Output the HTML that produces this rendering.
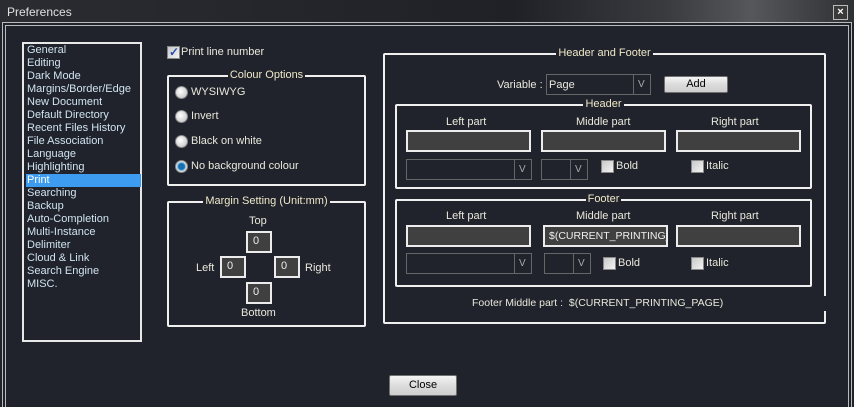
<!DOCTYPE html>
<html><head><style>
*{margin:0;padding:0;box-sizing:border-box}
html,body{width:854px;height:407px;overflow:hidden}
body{background:#20232b;font-family:"Liberation Sans",sans-serif;font-size:11px;color:#e8e8dc;position:relative}
.a{position:absolute;white-space:nowrap}
.tb{position:absolute;left:0;top:0;width:854px;height:23px;background:linear-gradient(90deg,#2a2c31 0%,#1f2126 60%,#3a3b3f 78%,#55575a 88%,#2f3034 100%)}
.g{position:absolute;border:2px solid #f0f0f0;border-radius:2px}
.gt{position:absolute;top:-8px;left:0;right:0;text-align:center;line-height:13px}
.gt span{background:#20232b;padding:0 2px;color:#efe8c8}
.ed{position:absolute;background:#404040;border:2px solid #ececec}
.cb{position:absolute;border:1px solid #666;background:#20232b}
.cb i{position:absolute;top:0;bottom:0;width:1px;background:#666}
.cb b{position:absolute;font-weight:normal;color:#aaa;font-size:10px;top:4px}
.chk{position:absolute;width:13px;height:13px;border:1px solid #888;background:linear-gradient(135deg,#c8c8c8,#f4f4f4)}
.rd{position:absolute;width:13px;height:13px;border-radius:50%;border:1px solid #888;background:radial-gradient(circle at 40% 40%,#fff,#bbb)}
.btn{position:absolute;border:1px solid #707070;border-radius:2px;background:linear-gradient(#f4f4f4,#dcdcdc 50%,#cfcfcf);color:#000;text-align:center}
.li{position:absolute;left:2px;width:115px;height:13px;line-height:13px;color:#cfe3f0;padding-left:1px}
.sm{position:absolute;width:26px;height:22px;background:#404040;border:2px solid #ececec;padding:2px 0 0 5px;color:#eee}
</style></head><body>
<div class="tb"></div>
<div class="a" style="left:7px;top:5px;font-size:12px;color:#e0e0e0">Preferences</div>
<div class="a" style="left:833px;top:5px;width:15px;height:15px;border:1px solid #bbb;background:#3a3a3a;color:#fff;font-size:11px;line-height:12px;text-align:center;font-weight:bold">×</div>
<div class="a" style="left:2px;top:22px;width:850px;height:385px;border:1px solid #bbb;border-bottom:none"></div>
<div class="a" style="left:5px;top:25px;width:844px;height:382px;border:1px solid #bbb;border-bottom:none"></div>

<div class="a" style="left:22px;top:42px;width:120px;height:300px;border:2px solid #e8e8e8">
<div class="li" style="top:0">General</div><div class="li" style="top:13px">Editing</div><div class="li" style="top:26px">Dark Mode</div><div class="li" style="top:39px">Margins/Border/Edge</div><div class="li" style="top:52px">New Document</div><div class="li" style="top:65px">Default Directory</div><div class="li" style="top:78px">Recent Files History</div><div class="li" style="top:91px">File Association</div><div class="li" style="top:104px">Language</div><div class="li" style="top:117px">Highlighting</div><div class="li" style="top:130px;background:#3d9bf0;color:#fff">Print</div><div class="li" style="top:143px">Searching</div><div class="li" style="top:156px">Backup</div><div class="li" style="top:169px">Auto-Completion</div><div class="li" style="top:182px">Multi-Instance</div><div class="li" style="top:195px">Delimiter</div><div class="li" style="top:208px">Cloud &amp; Link</div><div class="li" style="top:221px">Search Engine</div><div class="li" style="top:234px">MISC.</div>
</div>

<div class="chk" style="left:167px;top:46px"><span style="position:absolute;left:1px;top:-2px;color:#2a4fb0;font-size:12px;font-weight:bold">✓</span></div>
<div class="a" style="left:181px;top:46px">Print line number</div>

<div class="g" style="left:167px;top:75px;width:199px;height:111px"><div class="gt"><span>Colour Options</span></div></div>
<div class="rd" style="left:175px;top:86px"></div><div class="a" style="left:191px;top:86px">WYSIWYG</div>
<div class="rd" style="left:175px;top:110px"></div><div class="a" style="left:191px;top:110px">Invert</div>
<div class="rd" style="left:175px;top:135px"></div><div class="a" style="left:191px;top:135px">Black on white</div>
<div class="rd" style="left:175px;top:160px;background:radial-gradient(circle,#1a6fb0 0 3px,#7fc0e8 4px,#ddd 5px)"></div><div class="a" style="left:191px;top:160px">No background colour</div>

<div class="g" style="left:167px;top:201px;width:199px;height:126px"><div class="gt"><span>Margin Setting (Unit:mm)</span></div></div>
<div class="a" style="left:249px;top:215px">Top</div>
<div class="sm" style="left:246px;top:231px">0</div>
<div class="a" style="left:196px;top:262px">Left</div>
<div class="sm" style="left:220px;top:256px">0</div>
<div class="sm" style="left:274px;top:256px">0</div>
<div class="a" style="left:305px;top:262px">Right</div>
<div class="sm" style="left:246px;top:282px">0</div>
<div class="a" style="left:241px;top:307px">Bottom</div>

<div class="g" style="left:383px;top:53px;width:443px;height:271px"><div class="gt"><span>Header and Footer</span></div></div>
<div class="a" style="left:822px;top:296px;width:6px;height:15px;background:#20232b"></div>
<div class="a" style="left:497px;top:79px">Variable :</div>
<div class="cb" style="left:546px;top:74px;width:105px;height:21px"><span class="a" style="left:2px;top:4px">Page</span><i style="left:86px"></i><b style="left:91px">V</b></div>
<div class="btn" style="left:664px;top:76px;width:64px;height:17px;line-height:15px">Add</div>

<div class="g" style="left:395px;top:104px;width:417px;height:85px"><div class="gt"><span>Header</span></div></div>
<div class="a" style="left:446px;top:116px">Left part</div>
<div class="a" style="left:576px;top:116px">Middle part</div>
<div class="a" style="left:711px;top:116px">Right part</div>
<div class="ed" style="left:406px;top:130px;width:125px;height:22px"></div>
<div class="ed" style="left:541px;top:130px;width:125px;height:22px"></div>
<div class="ed" style="left:676px;top:130px;width:125px;height:22px"></div>
<div class="cb" style="left:406px;top:159px;width:126px;height:21px"><i style="left:107px"></i><b style="left:112px">V</b></div>
<div class="cb" style="left:541px;top:159px;width:47px;height:21px"><i style="left:28px"></i><b style="left:33px">V</b></div>
<div class="chk" style="left:601px;top:160px"></div><div class="a" style="left:616px;top:160px">Bold</div>
<div class="chk" style="left:691px;top:160px"></div><div class="a" style="left:706px;top:160px">Italic</div>

<div class="g" style="left:395px;top:199px;width:417px;height:88px"><div class="gt"><span>Footer</span></div></div>
<div class="a" style="left:446px;top:210px">Left part</div>
<div class="a" style="left:576px;top:210px">Middle part</div>
<div class="a" style="left:711px;top:210px">Right part</div>
<div class="ed" style="left:406px;top:225px;width:125px;height:22px"></div>
<div class="ed" style="left:543px;top:225px;width:125px;height:22px;padding:3px 0 0 4px;overflow:hidden;color:#eee;font-size:10.5px">$(CURRENT_PRINTING_</div>
<div class="ed" style="left:676px;top:225px;width:125px;height:22px"></div>
<div class="cb" style="left:406px;top:253px;width:126px;height:21px"><i style="left:107px"></i><b style="left:112px">V</b></div>
<div class="cb" style="left:544px;top:253px;width:47px;height:21px"><i style="left:28px"></i><b style="left:33px">V</b></div>
<div class="chk" style="left:603px;top:257px"></div><div class="a" style="left:618px;top:257px">Bold</div>
<div class="chk" style="left:691px;top:257px"></div><div class="a" style="left:706px;top:257px">Italic</div>
<div class="a" style="left:472px;top:297px;font-size:10.5px">Footer Middle part :&nbsp; $(CURRENT_PRINTING_PAGE)</div>

<div class="btn" style="left:389px;top:375px;width:68px;height:21px;line-height:19px">Close</div>
</body></html>
